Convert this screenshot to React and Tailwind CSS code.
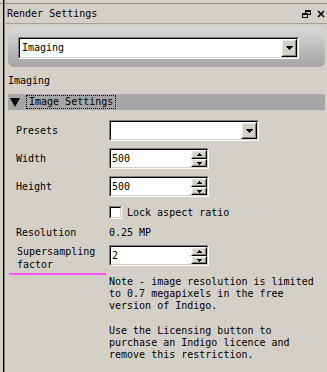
import React from "react";

function DownArrow() {
  return (
    <svg width="7" height="4" viewBox="0 0 7 4" shapeRendering="crispEdges">
      <rect x="0" y="0" width="7" height="1" fill="#000" />
      <rect x="1" y="1" width="5" height="1" fill="#000" />
      <rect x="2" y="2" width="3" height="1" fill="#000" />
      <rect x="3" y="3" width="1" height="1" fill="#000" />
    </svg>
  );
}

function SmallArrow({ up }) {
  return (
    <svg width="5" height="3" viewBox="0 0 5 3" shapeRendering="crispEdges">
      {up ? (
        <>
          <rect x="2" y="0" width="1" height="1" fill="#000" />
          <rect x="1" y="1" width="3" height="1" fill="#000" />
          <rect x="0" y="2" width="5" height="1" fill="#000" />
        </>
      ) : (
        <>
          <rect x="0" y="0" width="5" height="1" fill="#000" />
          <rect x="1" y="1" width="3" height="1" fill="#000" />
          <rect x="2" y="2" width="1" height="1" fill="#000" />
        </>
      )}
    </svg>
  );
}

function Raised({ className = "", children }) {
  return (
    <div className={"border border-t-white border-l-white border-b-black border-r-black " + className}>
      <div className="w-full h-full border border-t-[#e8e6e0] border-l-[#e8e6e0] border-b-[#808080] border-r-[#808080] bg-[#d4d0c8] flex items-center justify-center">
        {children}
      </div>
    </div>
  );
}

function Sunken({ className = "", children }) {
  return (
    <div className={"border border-t-[#808080] border-l-[#808080] border-b-white border-r-white " + className}>
      <div className="w-full h-full border border-t-black border-l-black border-b-[#d4d0c8] border-r-[#d4d0c8] bg-white flex items-center">
        {children}
      </div>
    </div>
  );
}

function Combo({ className = "", text = "" }) {
  return (
    <Sunken className={className}>
      <span className="flex-1 pl-[2px] leading-[12px]">{text}</span>
      <Raised className="w-[16px] h-full">
        <DownArrow />
      </Raised>
    </Sunken>
  );
}

function Spin({ value }) {
  return (
    <Sunken className="w-[100px] h-[21px]">
      <span className="flex-1 pl-[1px] leading-[12px]">{value}</span>
      <div className="w-[16px] h-full flex flex-col">
        <Raised className="w-full h-[9px]">
          <SmallArrow up />
        </Raised>
        <Raised className="w-full h-[8px]">
          <SmallArrow />
        </Raised>
      </div>
    </Sunken>
  );
}

export default function App() {
  return (
    <div className="w-[327px] h-[372px] bg-[#d4d0c8] flex font-['DejaVu_Sans_Mono',monospace] text-[10px] leading-[12px] text-black overflow-hidden">
      <div className="w-[3px] flex flex-col">
        <div className="h-[3px]" />
        <div className="h-px bg-[#8c8c8c]" />
      </div>
      <div className="flex-1 flex flex-col border-l border-black shadow-[inset_1px_0_0_#808080]">
        <div className="h-[3px]" />
        <div className="h-px bg-[#8c8c8c]" />
        {/* title */}
        <div className="h-[19px] flex items-center pl-[3px] pr-[2px]">
          <span className="flex-1">Render Settings</span>
          <svg width="9" height="8" viewBox="0 0 9 8" shapeRendering="crispEdges" className="mr-[6px]">
            <rect x="3" y="0" width="6" height="2" fill="#000" />
            <rect x="8" y="2" width="1" height="3" fill="#000" />
            <rect x="6" y="4" width="2" height="1" fill="#000" />
            <rect x="0" y="3" width="6" height="5" fill="#d4d0c8" />
            <rect x="0" y="3" width="6" height="2" fill="#000" />
            <rect x="0" y="5" width="1" height="3" fill="#000" />
            <rect x="5" y="5" width="1" height="3" fill="#000" />
            <rect x="0" y="7" width="6" height="1" fill="#000" />
            <rect x="3" y="2" width="1" height="1" fill="#000" />
          </svg>
          <svg width="8" height="8" viewBox="0 0 8 8">
            <path d="M1 1 L7 7 M7 1 L1 7" stroke="#000" strokeWidth="1.6" />
          </svg>
        </div>
        <div className="h-px bg-[#a0a0a0]" />
        {/* group box */}
        <div className="mt-[3px] ml-[4px] mr-[2px] h-[40px] rounded-[6px] bg-gradient-to-b from-[#dadada] to-[#a4a4a4] pt-[10px] pl-[10px]">
          <Combo className="w-[281px] h-[22px]" text="Imaging" />
        </div>
        <div className="mt-[8px] pl-[4px]">Imaging</div>
        {/* section header */}
        <div className="mt-[7px] ml-[4px] mr-[2px] h-[16px] bg-[#a6a6a6] flex items-center">
          <svg width="10" height="9" viewBox="0 0 10 9" className="ml-[2px]">
            <polygon points="0,0 10,0 5,9" fill="#000" />
          </svg>
          <div className="ml-[6px] h-[14px] border border-dotted border-black flex items-center px-[2px]">
            Image Settings
          </div>
        </div>
        {/* form */}
        <div className="mt-[10px] flex flex-col pl-[12px]">
          <div className="h-[21px] flex items-center">
            <span className="w-[93px]">Presets</span>
            <Combo className="w-[150px] h-[21px]" />
          </div>
          <div className="mt-[7px] h-[21px] flex items-center">
            <span className="w-[93px]">Width</span>
            <Spin value="500" />
          </div>
          <div className="mt-[7px] h-[21px] flex items-center">
            <span className="w-[93px]">Height</span>
            <Spin value="500" />
          </div>
          <div className="mt-[9px] h-[13px] flex items-center">
            <span className="w-[93px]" />
            <Sunken className="w-[13px] h-[13px]" />
            <span className="ml-[5px]">Lock aspect ratio</span>
          </div>
          <div className="mt-[8px] flex">
            <span className="w-[93px]">Resolution</span>
            <span>0.25 MP</span>
          </div>
          <div className="mt-[6px] flex items-start">
            <span className="w-[93px] leading-[13px] pl-[1px]">
              Supersampling
              <br />
              factor
            </span>
            <Spin value="2" />
          </div>
        </div>
        <div className="mt-[2px] ml-[5px] w-[97px] h-[2px] bg-[#ff55ff]" />
        <div className="mt-[1px] ml-[105px] leading-[12.2px] whitespace-pre">
          {"Note - image resolution is limited\nto 0.7 megapixels in the free\nversion of Indigo.\n\nUse the Licensing button to\npurchase an Indigo licence and\nremove this restriction."}
        </div>
      </div>
    </div>
  );
}
